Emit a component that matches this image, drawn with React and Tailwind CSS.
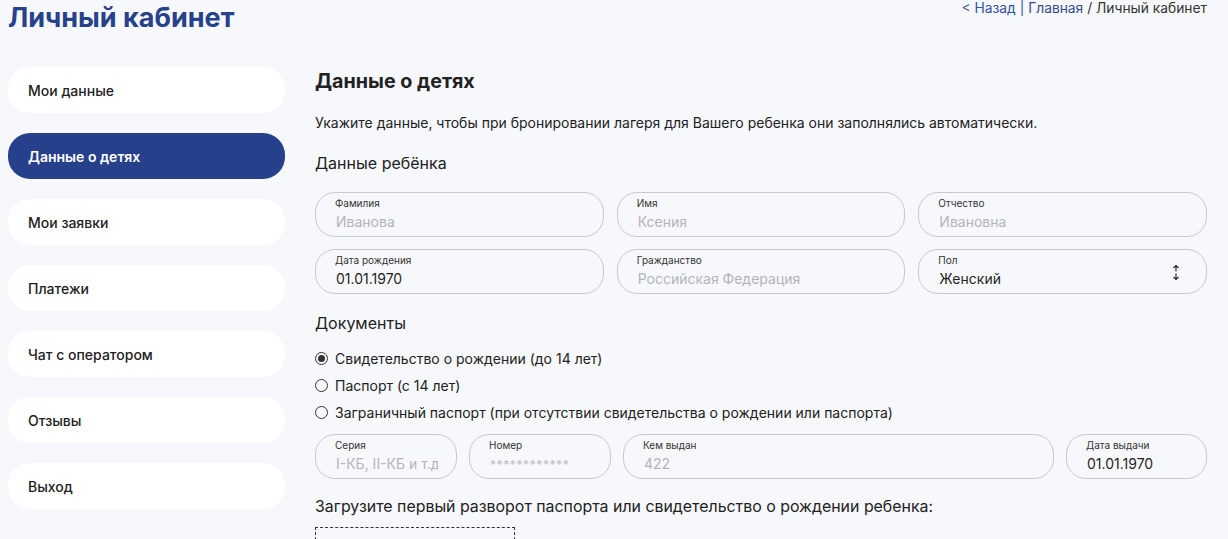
import React from 'react';

const menu = ['Мои данные', 'Данные о детях', 'Мои заявки', 'Платежи', 'Чат с оператором', 'Отзывы', 'Выход'];

function Field({ label, value, filled, className = '', children }) {
  return (
    <div className={`relative h-[45px] rounded-[20px] border border-[#c9c9cc] pl-[19px] pr-[18px] pt-[4px] ${className}`}>
      <div className="text-[10px] leading-[12px] text-[#333]">{label}</div>
      <div className={`mt-[4px] pl-[1px] text-[14px] leading-[18px] whitespace-nowrap overflow-hidden ${filled ? 'text-[#1f1f1f]' : 'text-[#b4b4b8]'}`}>
        {value}
      </div>
      {children}
    </div>
  );
}

function Radio({ checked, children }) {
  return (
    <label className="flex items-center gap-[7px] h-[20px] text-[14px] text-[#222]">
      <span className="w-[13px] h-[13px] rounded-full border border-[#333] flex items-center justify-center">
        {checked && <span className="w-[7px] h-[7px] rounded-full bg-[#333]"></span>}
      </span>
      {children}
    </label>
  );
}

export default function App() {
  return (
    <div className="min-h-screen bg-[#f7f8fc] pl-[8px] pr-[21px] overflow-hidden" style={{ fontFamily: 'Inter, "Noto Sans", sans-serif' }}>
      {/* шапка */}
      <div className="flex justify-between items-start">
        <h1 className="pt-[2px] text-[27px] leading-[32px] font-bold text-[#27418b]">Личный кабинет</h1>
        <div className="pt-[0px] text-[13.8px] leading-[16px]">
          <span className="text-[#3451a3]">&lt; Назад</span>
          <span className="text-[#3451a3] mx-[4px]">|</span>
          <span className="text-[#384a8e]">Главная</span>
          <span className="text-[#333]"> / Личный кабинет</span>
        </div>
      </div>

      <div className="flex">
        {/* меню */}
        <div className="w-[277px] shrink-0 mt-[33px] flex flex-col gap-[20px]">
          {menu.map((item, i) => (
            <div
              key={item}
              className={`h-[46px] rounded-[22px] flex items-center pl-[20px] text-[14px] ${i === 1 ? 'bg-[#27408b] text-white font-semibold' : 'bg-white text-[#222] font-medium'}`}
            >
              {item}
            </div>
          ))}
        </div>

        {/* контент */}
        <div className="flex-1 ml-[30px] pt-[35px]">
          <h2 className="text-[19.7px] leading-[24px] font-bold text-[#222]">Данные о детях</h2>
          <p className="mt-[20px] text-[14px] leading-[20px] text-[#222]">
            Укажите данные, чтобы при бронировании лагеря для Вашего ребенка они заполнялись автоматически.
          </p>
          <h3 className="mt-[18px] text-[16px] leading-[24px] text-[#222]">Данные ребёнка</h3>

          <div className="mt-[17px] grid grid-cols-3 gap-x-[13px] gap-y-[12px]">
            <Field label="Фамилия" value="Иванова" />
            <Field label="Имя" value="Ксения" />
            <Field label="Отчество" value="Ивановна" />
            <Field label="Дата рождения" value="01.01.1970" filled />
            <Field label="Гражданство" value="Российская Федерация" />
            <Field label="Пол" value="Женский" filled>
              <svg className="absolute right-[26px] top-[14px]" width="8" height="17" viewBox="0 0 8 17" fill="none" stroke="#222" strokeWidth="1.1">
                <path d="M4 1.5v6M1.5 4L4 1.5 6.5 4" />
                <path d="M4 9.5v6M1.5 13L4 15.5 6.5 13" />
              </svg>
            </Field>
          </div>

          <h3 className="mt-[17px] text-[16px] leading-[24px] text-[#222]">Документы</h3>
          <div className="mt-[13px] flex flex-col gap-[7px]">
            <Radio checked>Свидетельство о рождении (до 14 лет)</Radio>
            <Radio>Паспорт (с 14 лет)</Radio>
            <Radio>Заграничный паспорт (при отсутствии свидетельства о рождении или паспорта)</Radio>
          </div>

          <div className="mt-[12px] flex gap-[12px]">
            <Field className="w-[142px]" label="Серия" value="I-КБ, II-КБ и т.д." />
            <Field className="w-[142px]" label="Номер" value={<span className="text-[12px] tracking-[0.6px] text-[#bdbdc2]">************</span>} />
            <Field className="flex-1" label="Кем выдан" value="422" />
            <Field className="w-[141px]" label="Дата выдачи" value="01.01.1970" filled />
          </div>

          <p className="mt-[16px] text-[15.9px] leading-[24px] text-[#222]">
            Загрузите первый разворот паспорта или свидетельство о рождении ребенка:
          </p>
          <div className="mt-[8px] w-[200px] h-[120px] border border-dashed border-[#333]"></div>
        </div>
      </div>
    </div>
  );
}
